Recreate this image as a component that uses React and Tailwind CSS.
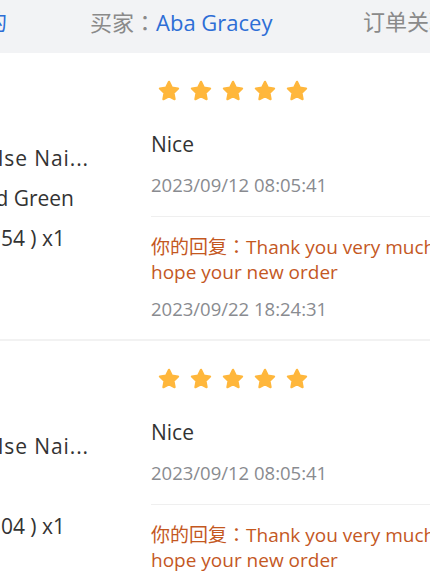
import React from "react";

const FONT = { fontFamily: '"Open Sans", "Noto Sans CJK SC", sans-serif' };
const TC = { fontFamily: '"Noto Sans CJK TC", sans-serif' };

function Star() {
  return (
    <svg width="24" height="24" viewBox="0 0 24 24" className="shrink-0">
      <path
        d="M12 2.8l2.8 5.8 6.3.9-4.6 4.4 1.1 6.3L12 17.2l-5.6 3 1.1-6.3-4.6-4.4 6.3-.9z"
        fill="#FFB73C"
        stroke="#FFB73C"
        strokeWidth="2.2"
        strokeLinejoin="round"
      />
    </svg>
  );
}

function LeftLine({ end, children, wide }) {
  return (
    <div className="h-[40px] flex items-center justify-end" style={{ width: end }}>
      <span
        className={
          wide
            ? "whitespace-nowrap text-[21px] text-[#333333] leading-[40px] tracking-[0.9px]"
            : "whitespace-nowrap text-[21px] text-[#333333] leading-[40px]"
        }
      >
        {children}
      </span>
    </div>
  );
}

function Row({ second, code }) {
  return (
    <div className="flex border-b-2 border-[#f2f2f2] h-[288px]">
      <div className="w-[151px] shrink-0 pt-[85px]">
        <LeftLine end={89} wide>
          Press On Nails False Nai...
        </LeftLine>
        {second ? (
          <LeftLine end={74}>Color：Mixed Green</LeftLine>
        ) : (
          <div className="h-[40px]" />
        )}
        <LeftLine end={65}>
          （XS-23{code} ) x1
        </LeftLine>
      </div>
      <div className="w-[330px] shrink-0 pt-[26px]">
        <div className="flex gap-[8px] pl-[6px]">
          <Star />
          <Star />
          <Star />
          <Star />
          <Star />
        </div>
        <div className="mt-[26px] text-[21px] leading-[30px] text-[#333333]">Nice</div>
        <div className="mt-[13px] text-[18.5px] leading-[26px] text-[#898b90]">2023/09/12 08:05:41</div>
        <div className="mt-[18px] h-px bg-[#efefef]" />
        <div className="mt-[16px] text-[19px] leading-[25px] text-[#c4581f] whitespace-nowrap">
          <div>
            你的回复<span style={TC}>：</span>Thank you very much,
          </div>
          <div>hope your new order</div>
        </div>
        <div className="mt-[11px] text-[18.5px] leading-[26px] text-[#898b90]">2023/09/22 18:24:31</div>
      </div>
    </div>
  );
}

export default function App() {
  return (
    <div className="w-[430px] h-[580px] overflow-hidden bg-white" style={FONT}>
      <div className="h-[53px] bg-[#f2f3f5] flex items-start pt-[6px] text-[22px] leading-[30px] whitespace-nowrap">
        <div className="w-[90px] shrink-0 overflow-hidden">
          <span className="block -ml-[15px] text-[#2d6ed6]">的</span>
        </div>
        <div className="w-[273px] shrink-0">
          <span className="text-[#8a8a8a]">
            买家<span style={TC}>：</span>
          </span>
          <span className="text-[#2d6ed6]">Aba Gracey</span>
        </div>
        <div className="text-[#8a8a8a]">订单关联</div>
      </div>
      <Row second code="54" />
      <Row code="04" />
    </div>
  );
}
